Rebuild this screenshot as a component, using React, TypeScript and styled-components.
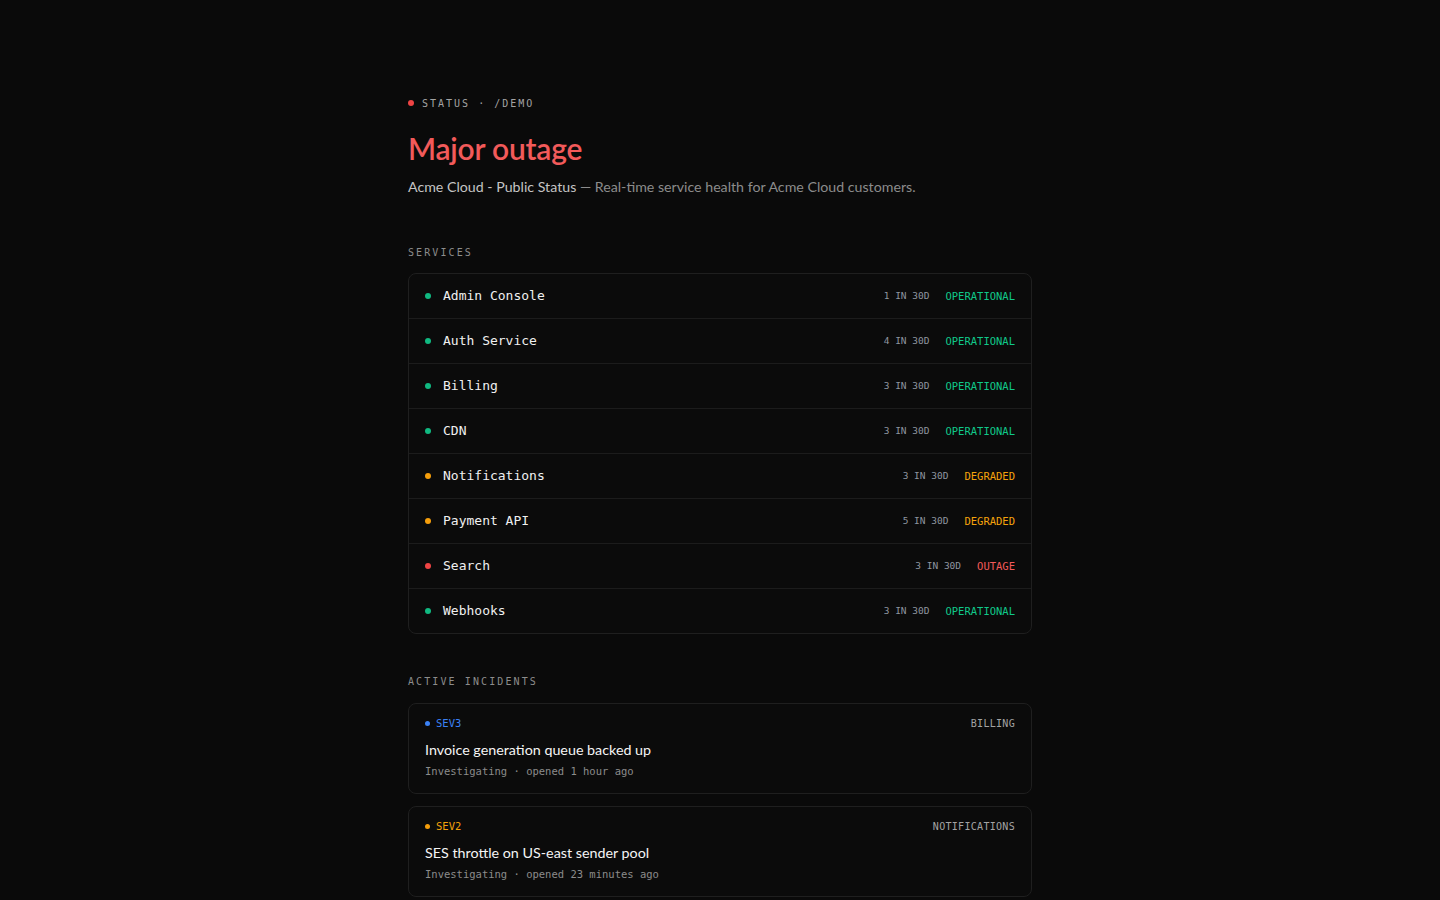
import React from "react"
import styled, { createGlobalStyle } from "styled-components"

const GlobalStyle = createGlobalStyle`
  html, body {
    margin: 0;
    padding: 0;
    background: #0a0a0a;
  }
  body {
    font-family: "Segoe UI", Lato, "Noto Sans", sans-serif;
    color: #e5e5e5;
  }
`

const mono = `"DejaVu Sans Mono", "Liberation Mono", monospace`

type Tone = "ok" | "warn" | "bad" | "info"

const toneColor: Record<Tone, string> = {
  ok: "#10b981",
  warn: "#f59e0b",
  bad: "#ef4444",
  info: "#3b82f6",
}

const textTone: Record<Tone, string> = {
  ok: "#10c98a",
  warn: "#f5a30b",
  bad: "#f25a5a",
  info: "#3b82f6",
}

const Page = styled.main`
  min-height: 100vh;
  display: flex;
  justify-content: center;
  padding: 97px 20px 0;
  box-sizing: border-box;
`

const Column = styled.div`
  width: 624px;
  display: flex;
  flex-direction: column;
`

const Crumb = styled.div`
  display: flex;
  align-items: center;
  gap: 8px;
  font-family: ${mono};
  font-size: 10px;
  letter-spacing: 2px;
  color: #a3a3a3;
  height: 12px;
`

const Dot = styled.span<{ $tone: Tone; $size?: number }>`
  width: ${(p) => p.$size ?? 6}px;
  height: ${(p) => p.$size ?? 6}px;
  border-radius: 50%;
  background: ${(p) => toneColor[p.$tone]};
  flex-shrink: 0;
`

const Title = styled.h1`
  margin: 21px 0 0;
  font-size: 30px;
  font-weight: 600;
  color: #f25a5a;
  line-height: 36px;
  letter-spacing: -0.2px;
`

const Subtitle = styled.p`
  margin: 11px 0 0;
  font-size: 14.2px;
  line-height: 20px;
  color: #8c8c8c;

  strong {
    font-weight: 400;
    color: #c4c4c4;
  }
`

const SectionLabel = styled.h2<{ $top: number; $bottom: number }>`
  margin: ${(p) => p.$top}px 0 ${(p) => p.$bottom}px;
  font-family: ${mono};
  font-size: 10px;
  font-weight: 400;
  letter-spacing: 2.1px;
  color: #8c8c8c;
  line-height: 12px;
`

const ServiceCard = styled.div`
  border: 1px solid #1f1f1f;
  border-radius: 8px;
  background: #0b0b0b;
  overflow: hidden;
`

const ServiceRow = styled.div`
  height: 44px;
  display: flex;
  align-items: center;
  padding: 0 16px 1px;
  gap: 12px;
  box-sizing: border-box;

  & + & {
    border-top: 1px solid #1c1c1c;
    height: 45px;
  }
`

const ServiceName = styled.span`
  flex: 1;
  font-family: ${mono};
  font-size: 13px;
  color: #f0f0f0;
`

const Count = styled.span`
  font-family: ${mono};
  font-size: 9.5px;
  color: #8f96a0;
  margin-right: 4px;
`

const State = styled.span<{ $tone: Tone }>`
  font-family: ${mono};
  font-size: 10.5px;
  color: ${(p) => textTone[p.$tone]};
`

const IncidentList = styled.div`
  display: flex;
  flex-direction: column;
  gap: 12px;
`

const IncidentCard = styled.div`
  border: 1px solid #1f1f1f;
  border-radius: 8px;
  background: #0b0b0b;
  padding: 12px 16px 14px;
  display: flex;
  flex-direction: column;
`

const IncidentTop = styled.div`
  display: flex;
  align-items: center;
  gap: 6px;
  height: 14px;
`

const Sev = styled.span<{ $tone: Tone }>`
  flex: 1;
  font-family: ${mono};
  font-size: 10.5px;
  color: ${(p) => textTone[p.$tone]};
`

const Component = styled.span`
  font-family: ${mono};
  font-size: 10px;
  color: #a3a3a3;
  letter-spacing: 0.3px;
`

const IncidentTitle = styled.div`
  margin-top: 10px;
  font-size: 14.3px;
  color: #f5f5f5;
  line-height: 20px;
`

const Meta = styled.div`
  margin-top: 3px;
  font-family: ${mono};
  font-size: 10.5px;
  color: #8c8c8c;
  line-height: 16px;
`

const services: { name: string; count: number; tone: Tone; label: string }[] = [
  { name: "Admin Console", count: 1, tone: "ok", label: "OPERATIONAL" },
  { name: "Auth Service", count: 4, tone: "ok", label: "OPERATIONAL" },
  { name: "Billing", count: 3, tone: "ok", label: "OPERATIONAL" },
  { name: "CDN", count: 3, tone: "ok", label: "OPERATIONAL" },
  { name: "Notifications", count: 3, tone: "warn", label: "DEGRADED" },
  { name: "Payment API", count: 5, tone: "warn", label: "DEGRADED" },
  { name: "Search", count: 3, tone: "bad", label: "OUTAGE" },
  { name: "Webhooks", count: 3, tone: "ok", label: "OPERATIONAL" },
]

const incidents: { sev: string; tone: Tone; component: string; title: string; meta: string }[] = [
  {
    sev: "SEV3",
    tone: "info",
    component: "BILLING",
    title: "Invoice generation queue backed up",
    meta: "Investigating · opened 1 hour ago",
  },
  {
    sev: "SEV2",
    tone: "warn",
    component: "NOTIFICATIONS",
    title: "SES throttle on US-east sender pool",
    meta: "Investigating · opened 23 minutes ago",
  },
]

export default function App() {
  return (
    <>
      <GlobalStyle />
      <Page>
        <Column>
          <Crumb>
            <Dot $tone="bad" />
            <span>STATUS · /DEMO</span>
          </Crumb>
          <Title>Major outage</Title>
          <Subtitle>
            <strong>Acme Cloud - Public Status</strong> — Real-time service health for Acme Cloud customers.
          </Subtitle>

          <SectionLabel $top={50} $bottom={14}>SERVICES</SectionLabel>
          <ServiceCard>
            {services.map((s) => (
              <ServiceRow key={s.name}>
                <Dot $tone={s.tone} />
                <ServiceName>{s.name}</ServiceName>
                <Count>{s.count} IN 30D</Count>
                <State $tone={s.tone}>{s.label}</State>
              </ServiceRow>
            ))}
          </ServiceCard>

          <SectionLabel $top={42} $bottom={15}>ACTIVE INCIDENTS</SectionLabel>
          <IncidentList>
            {incidents.map((i) => (
              <IncidentCard key={i.title}>
                <IncidentTop>
                  <Dot $tone={i.tone} $size={5} />
                  <Sev $tone={i.tone}>{i.sev}</Sev>
                  <Component>{i.component}</Component>
                </IncidentTop>
                <IncidentTitle>{i.title}</IncidentTitle>
                <Meta>{i.meta}</Meta>
              </IncidentCard>
            ))}
          </IncidentList>
        </Column>
      </Page>
    </>
  )
}
